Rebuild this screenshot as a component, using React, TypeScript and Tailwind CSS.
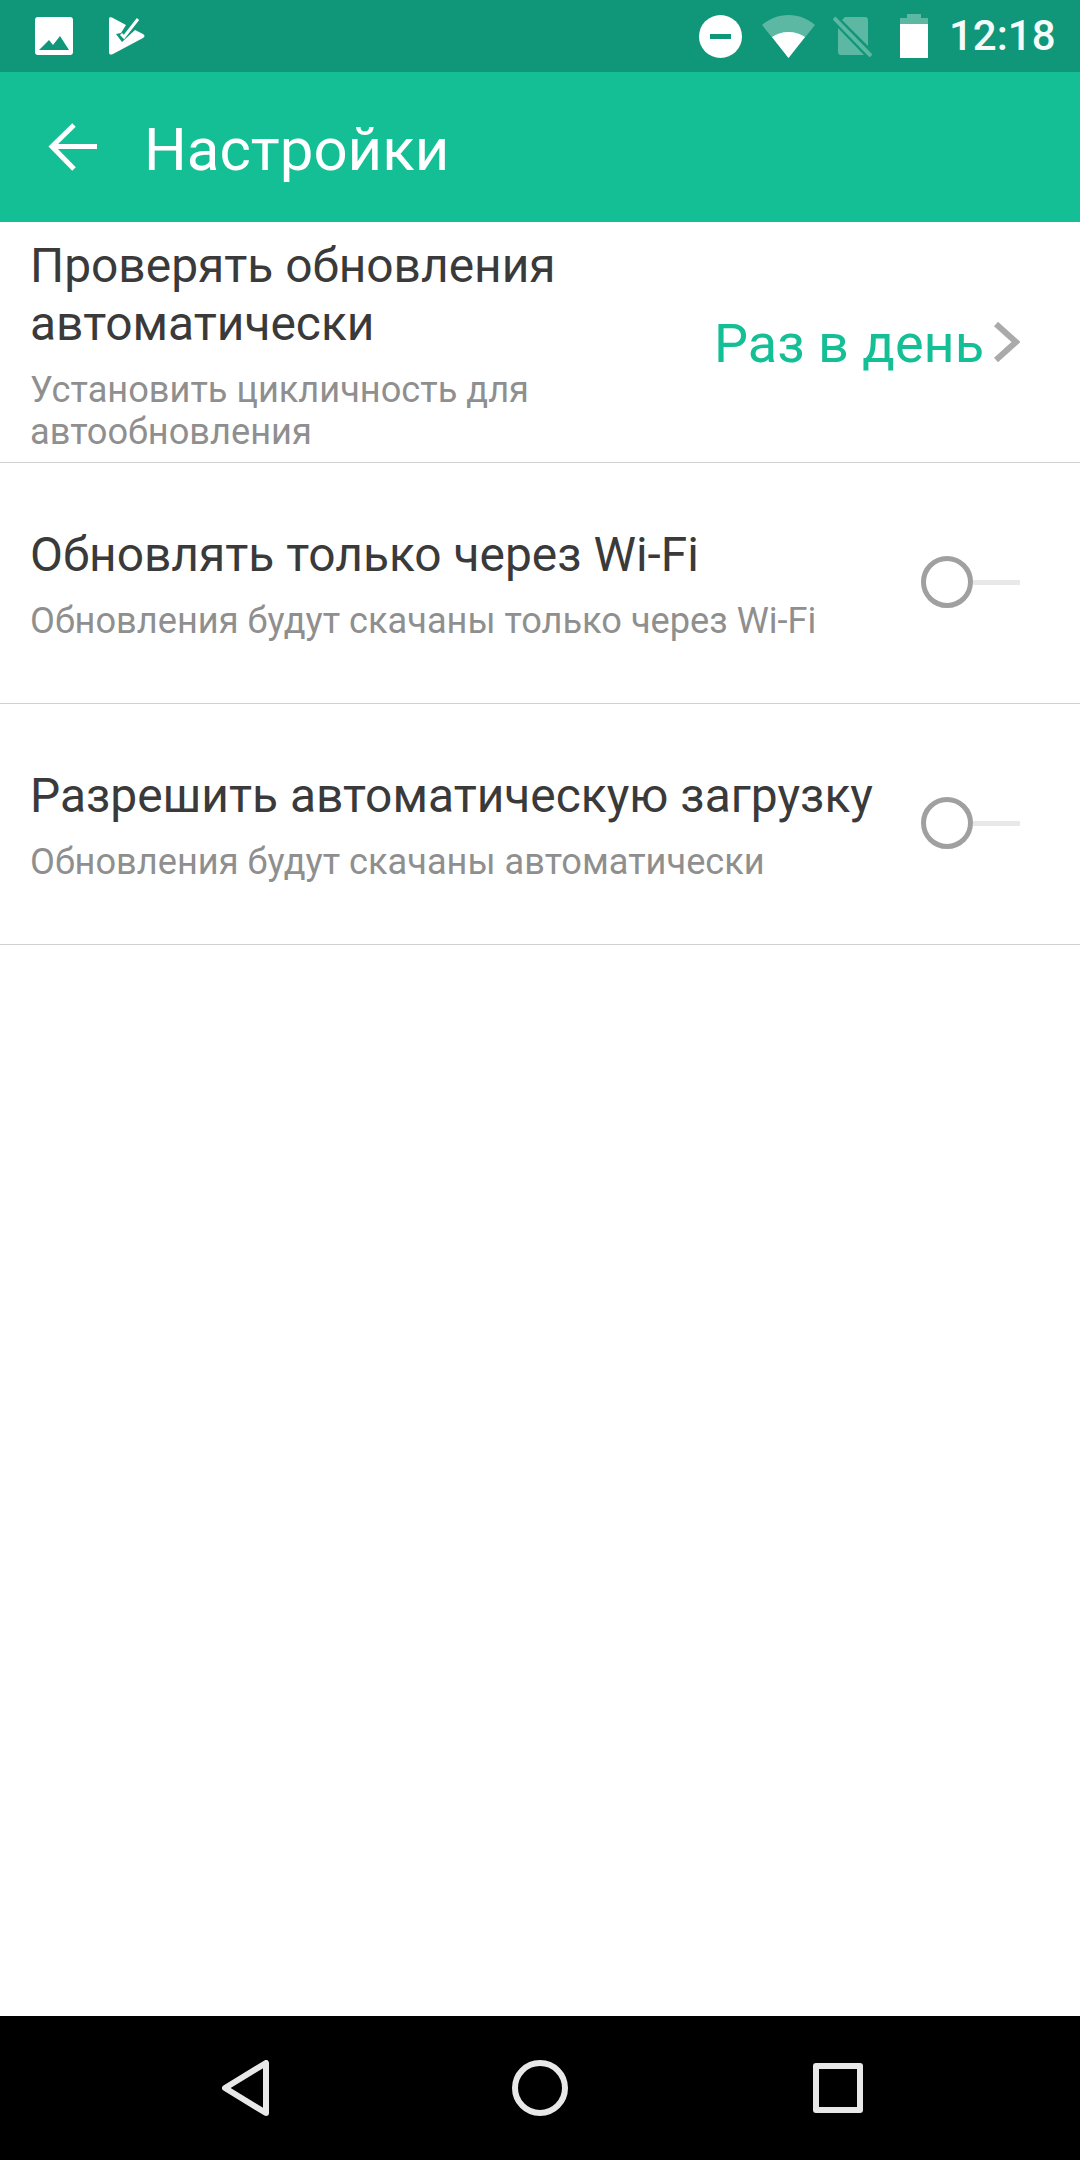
import React from "react";

const font = { fontFamily: "Roboto, sans-serif" };

function Toggle() {
  return (
    <div className="flex items-center w-[99px] shrink-0 mt-[-2px]">
      <div className="w-[52px] h-[52px] rounded-full border-[5px] border-[#a0a0a0] bg-white shrink-0" />
      <div className="flex-1 h-[5px] bg-[#e8e8e8]" />
    </div>
  );
}

function Row({ title, sub }: { title: string; sub: string }) {
  return (
    <div className="flex items-center justify-between h-[241px] border-b border-[#d0d0d0] pl-[30px] pr-[60px]">
      <div className="flex flex-col mt-[3px]">
        <div className="text-[47.9px] leading-[57px] text-[#3a3a3a] whitespace-nowrap">{title}</div>
        <div className="text-[36.2px] leading-[42px] text-[#8f8f8f] mt-[16px] whitespace-nowrap">{sub}</div>
      </div>
      <Toggle />
    </div>
  );
}

export default function App() {
  return (
    <div className="w-[1080px] h-[2160px] flex flex-col bg-white overflow-hidden" style={font}>
      <div className="h-[72px] bg-[#109678] flex items-center pl-[35px] pr-[28px] shrink-0">
        <svg width="38" height="38" viewBox="0 0 38 38" className="shrink-0">
          <path fillRule="evenodd" fill="#fff" d="M3 0h32a3 3 0 0 1 3 3v32a3 3 0 0 1-3 3H3a3 3 0 0 1-3-3V3a3 3 0 0 1 3-3zM4 33h30L25 19l-7 9-4-5z" />
        </svg>
        <svg width="36" height="38" viewBox="0 0 36 38" className="ml-[36px] shrink-0">
          <path fill="#fff" d="M0 2c0-2 1-2 3-1.500L17 8l-5 8-5 1 6 8 13-12 8 4c2 1 2 3 0 4L4 37c-2 1-4 1-4-2z" />
          <path fill="none" stroke="#fff" strokeWidth="3" d="M12 17l3 3L29 2" />
        </svg>
        <div className="flex-1" />
        <div className="w-[43px] h-[43px] rounded-full bg-white flex items-center justify-center shrink-0">
          <div className="w-[21px] h-[5px] bg-[#109678]" />
        </div>
        <svg width="53" height="43" viewBox="0 0 53 43" className="ml-[20px] shrink-0">
          <path fill="#5cb8a3" d="M0 10C7 4 16 0 26.500 0S46 4 53 10L26.500 43z" />
          <path fill="#fff" d="M10 22c4-3 10-5 16.500-5S39 19 43 22L26.500 43z" />
        </svg>
        <svg width="40" height="42" viewBox="0 0 40 42" className="ml-[18px] shrink-0">
          <path fill="#5cb8a3" d="M12 2h20a3 3 0 0 1 3 3v26L9 5zM5 13l26 27H8a3 3 0 0 1-3-3z" />
          <path stroke="#5cb8a3" strokeWidth="4" d="M1 3l37 38" />
        </svg>
        <div className="ml-[27px] w-[28px] h-[44px] flex flex-col items-center shrink-0">
          <div className="w-[14px] h-[4px] bg-[#5cb8a3]" />
          <div className="w-full h-[6px] bg-[#5cb8a3]" />
          <div className="w-full flex-1 bg-white" />
        </div>
        <div className="ml-[21px] w-[103px] text-[42px] leading-none font-medium text-[#f4fbf9] shrink-0">12:18</div>
      </div>

      <div className="h-[150px] bg-[#15bf95] flex items-center pl-[48px] shrink-0">
        <svg width="50" height="48" viewBox="0 0 50 48" className="shrink-0 mt-[-1px]">
          <path fill="none" stroke="#fff" strokeWidth="5" d="M49 23.500H4M26 2L4 23.500 26 46" />
        </svg>
        <div className="ml-[46px] mt-[5px] text-[60px] leading-none text-white">Настройки</div>
      </div>

      <div className="flex-1">
        <div className="flex items-center justify-between h-[241px] border-b border-[#d0d0d0] pl-[30px] pr-[60px]">
          <div className="flex flex-col mt-[5px]">
            <div className="text-[47.9px] leading-[58px] text-[#3a3a3a]">
              Проверять обновления
              <br />
              автоматически
            </div>
            <div className="text-[36.2px] leading-[42px] text-[#8f8f8f] mt-[16px]">
              Установить цикличность для
              <br />
              автообновления
            </div>
          </div>
          <div className="flex items-center">
            <span className="text-[54px] leading-none text-[#15bf95] mt-[4px]">Раз в день</span>
            <svg width="27" height="40" viewBox="0 0 27 40" className="ml-[9px]">
              <path fill="none" stroke="#aaa" strokeWidth="6" d="M3 2l20 18L3 38" />
            </svg>
          </div>
        </div>
        <Row title="Обновлять только через Wi-Fi" sub="Обновления будут скачаны только через Wi-Fi" />
        <Row title="Разрешить автоматическую загрузку" sub="Обновления будут скачаны автоматически" />
      </div>

      <div className="h-[144px] bg-black flex items-center pl-[222px] pr-[216px] shrink-0">
        <svg width="47" height="56" viewBox="0 0 47 56" className="shrink-0">
          <path fill="none" stroke="#e8e8e8" strokeWidth="6" strokeLinejoin="round" d="M44 3v50L3 28z" />
        </svg>
        <div className="ml-[243px] w-[56px] h-[56px] rounded-full border-[6px] border-[#e8e8e8] shrink-0 mt-[-1px]" />
        <div className="ml-[245px] w-[50px] h-[50px] rounded-[3px] border-[6px] border-[#e8e8e8] shrink-0 mt-[-1px]" />
      </div>
    </div>
  );
}
